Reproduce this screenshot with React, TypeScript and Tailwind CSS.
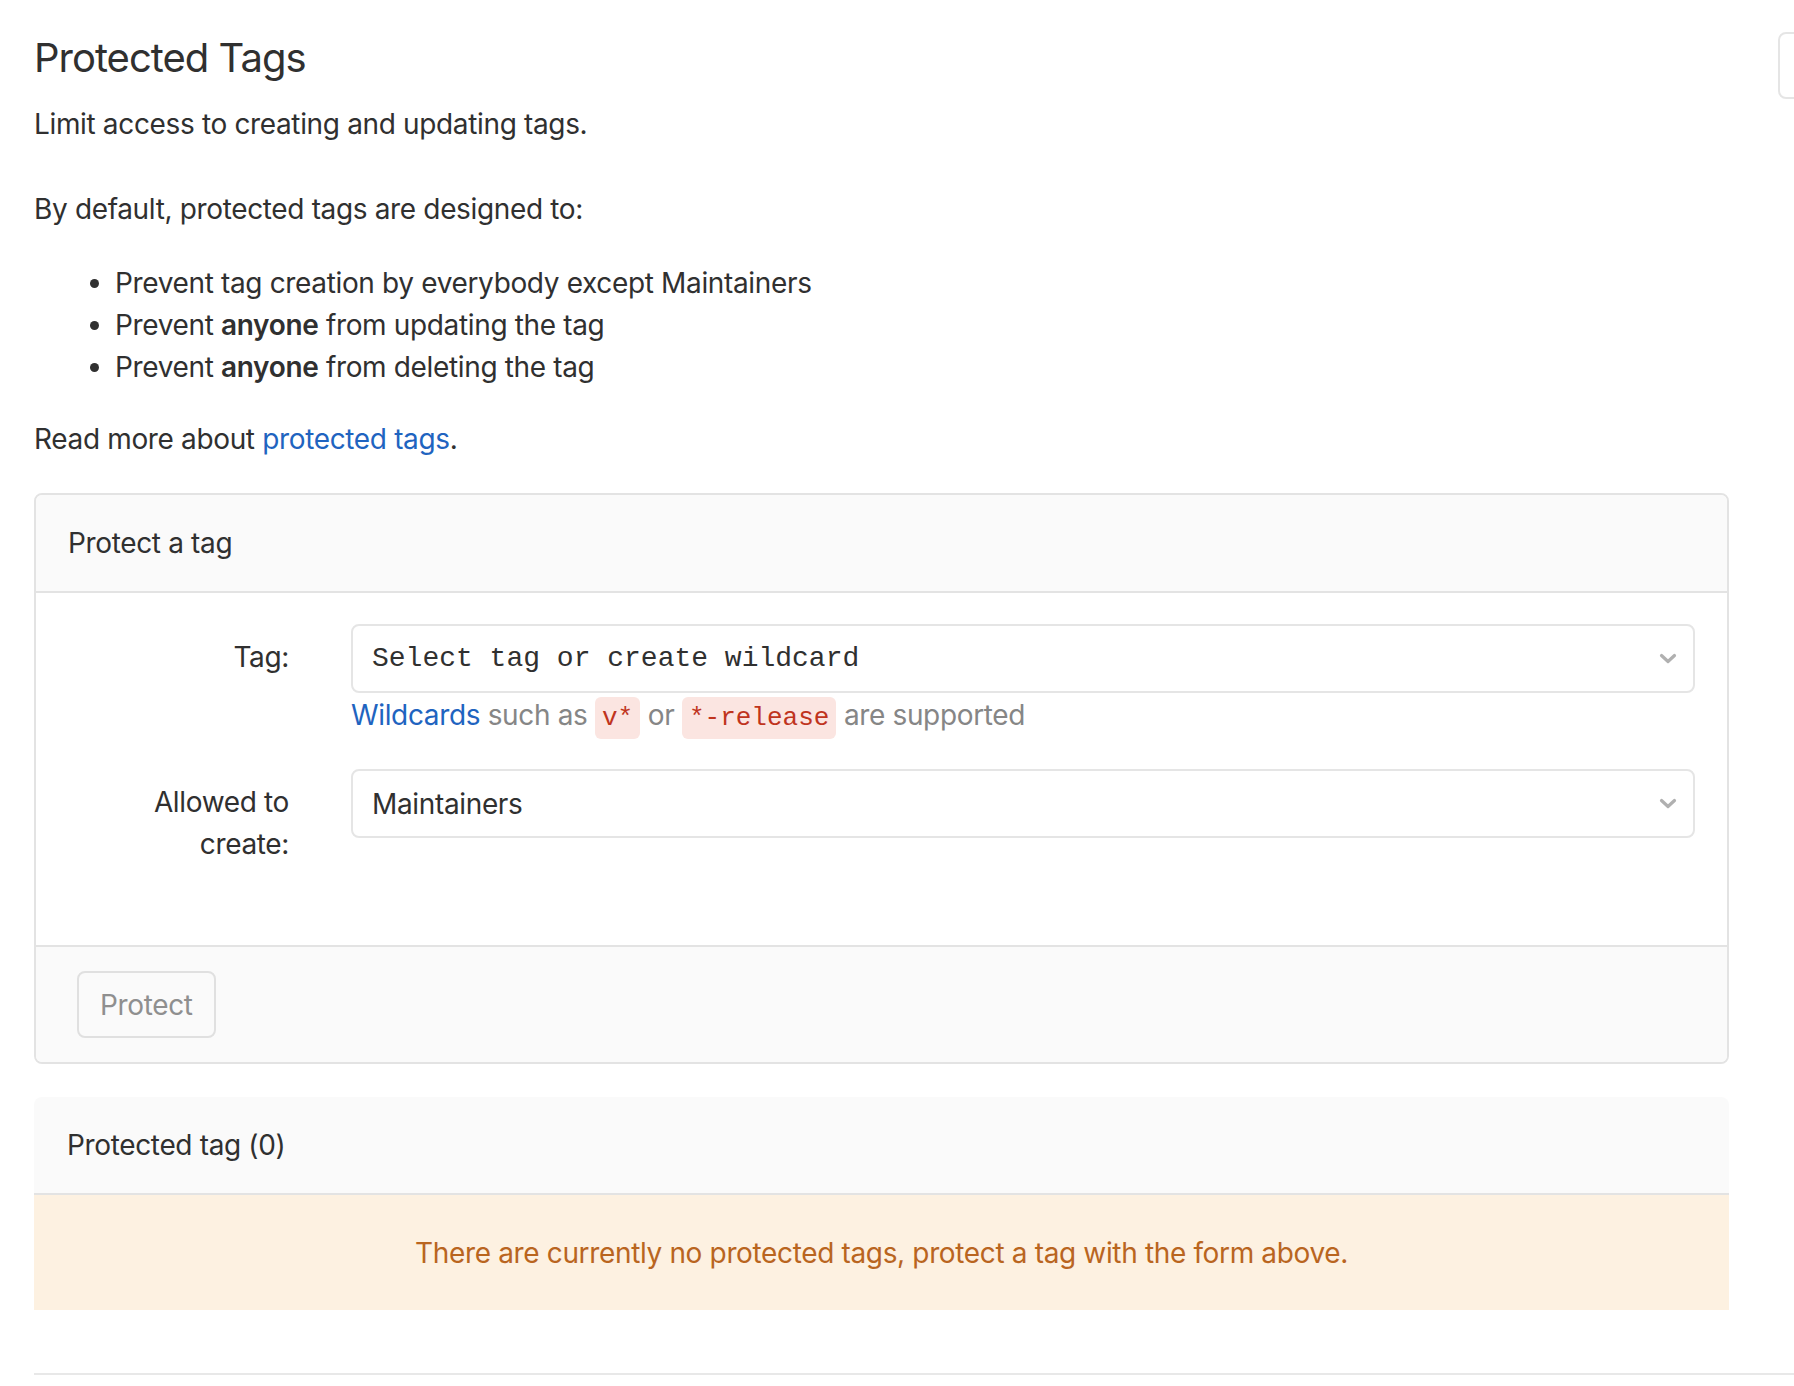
import React from 'react';

function Chevron() {
  return (
    <svg width="18" height="11" viewBox="0 0 18 11" className="shrink-0">
      <polyline points="2.5,2.5 9,8.5 15.5,2.5" fill="none" stroke="#b0b0b0" strokeWidth="3.2" strokeLinecap="round" strokeLinejoin="round" />
    </svg>
  );
}

function Code({ children }: { children: React.ReactNode }) {
  return (
    <code className="rounded-[6px] bg-[#fbe5e1] px-[7px] py-[6px] font-['Liberation_Mono',monospace] text-[26px] leading-none tracking-normal text-[#c0341d]">
      {children}
    </code>
  );
}

export default function App() {
  return (
    <div className="relative min-h-[1386px] bg-white font-['Inter',sans-serif] text-[28px] leading-[42px] tracking-[-0.35px] text-[#303030]">
      {/* cut-off button at the top right */}
      <div className="absolute left-[1778px] top-[32px] h-[67px] w-[40px] rounded-[8px] border-2 border-[#e5e5e5]" />

      <div className="pl-[34px] pt-[34px]">
        <div className="w-[1695px]">
          <h3 className="text-[40px] leading-[48px] font-normal tracking-[-1px] text-[#303030]">Protected Tags</h3>
          <p className="mt-[21px]">Limit access to creating and updating tags.</p>
          <p className="mt-[43px]">By default, protected tags are designed to:</p>
          <ul className="mt-[32px] list-disc pl-[81px]">
            <li>Prevent tag creation by everybody except Maintainers</li>
            <li>
              Prevent <strong className="font-semibold">anyone</strong> from updating the tag
            </li>
            <li>
              Prevent <strong className="font-semibold">anyone</strong> from deleting the tag
            </li>
          </ul>
          <p className="mt-[30px]">
            Read more about <a className="text-[#1f64c0]">protected tags</a>.
          </p>

          {/* Protect a tag card */}
          <div className="mt-[33px] overflow-hidden rounded-[8px] border-2 border-[#e3e3e3]">
            <div className="border-b-2 border-[#e3e3e3] bg-[#fafafa] px-[32px] py-[27px]">Protect a tag</div>
            <div className="bg-white pb-[80px] pr-[32px] pt-[31px]">
              <div className="flex gap-[62px]">
                <label className="w-[253px] shrink-0 pt-[12px] text-right">Tag:</label>
                <div className="flex-1">
                  <div className="flex h-[69px] items-center justify-between rounded-[8px] border-2 border-[#e5e5e5] pl-[19px] pr-[16px]">
                    <span className="font-['Liberation_Mono',monospace] text-[28px] tracking-normal">Select tag or create wildcard</span>
                    <Chevron />
                  </div>
                  <p className="mt-[1px] text-[#868686]">
                    <a className="text-[#1f64c0]">Wildcards</a> such as <Code>v*</Code> or <Code>*-release</Code> are supported
                  </p>
                </div>
              </div>
              <div className="mt-[33px] flex gap-[62px]">
                <label className="w-[253px] shrink-0 pt-[12px] text-right">
                  Allowed to
                  <br />
                  create:
                </label>
                <div className="flex-1">
                  <div className="flex h-[69px] items-center justify-between rounded-[8px] border-2 border-[#e5e5e5] pl-[19px] pr-[16px]">
                    <span>Maintainers</span>
                    <Chevron />
                  </div>
                </div>
              </div>
            </div>
            <div className="border-t-2 border-[#e3e3e3] bg-[#fafafa] px-[41px] py-[24px]">
              <button className="h-[67px] rounded-[8px] border-2 border-[#e0e0e0] bg-[#fafafa] px-[21px] text-[#8f8f8f]">
                Protect
              </button>
            </div>
          </div>

          {/* Protected tag list */}
          <div className="mt-[33px] overflow-hidden rounded-t-[8px]">
            <div className="border-b-2 border-[#e3e3e3] bg-[#fafafa] px-[33px] py-[27px]">Protected tag (0)</div>
            <div className="bg-[#fdf1e1] pb-[36px] pt-[37px] text-center text-[#b9651f]">
              There are currently no protected tags, protect a tag with the form above.
            </div>
          </div>
        </div>
        <div className="mt-[63px] border-t-2 border-[#e8e8e8]" />
      </div>
    </div>
  );
}
